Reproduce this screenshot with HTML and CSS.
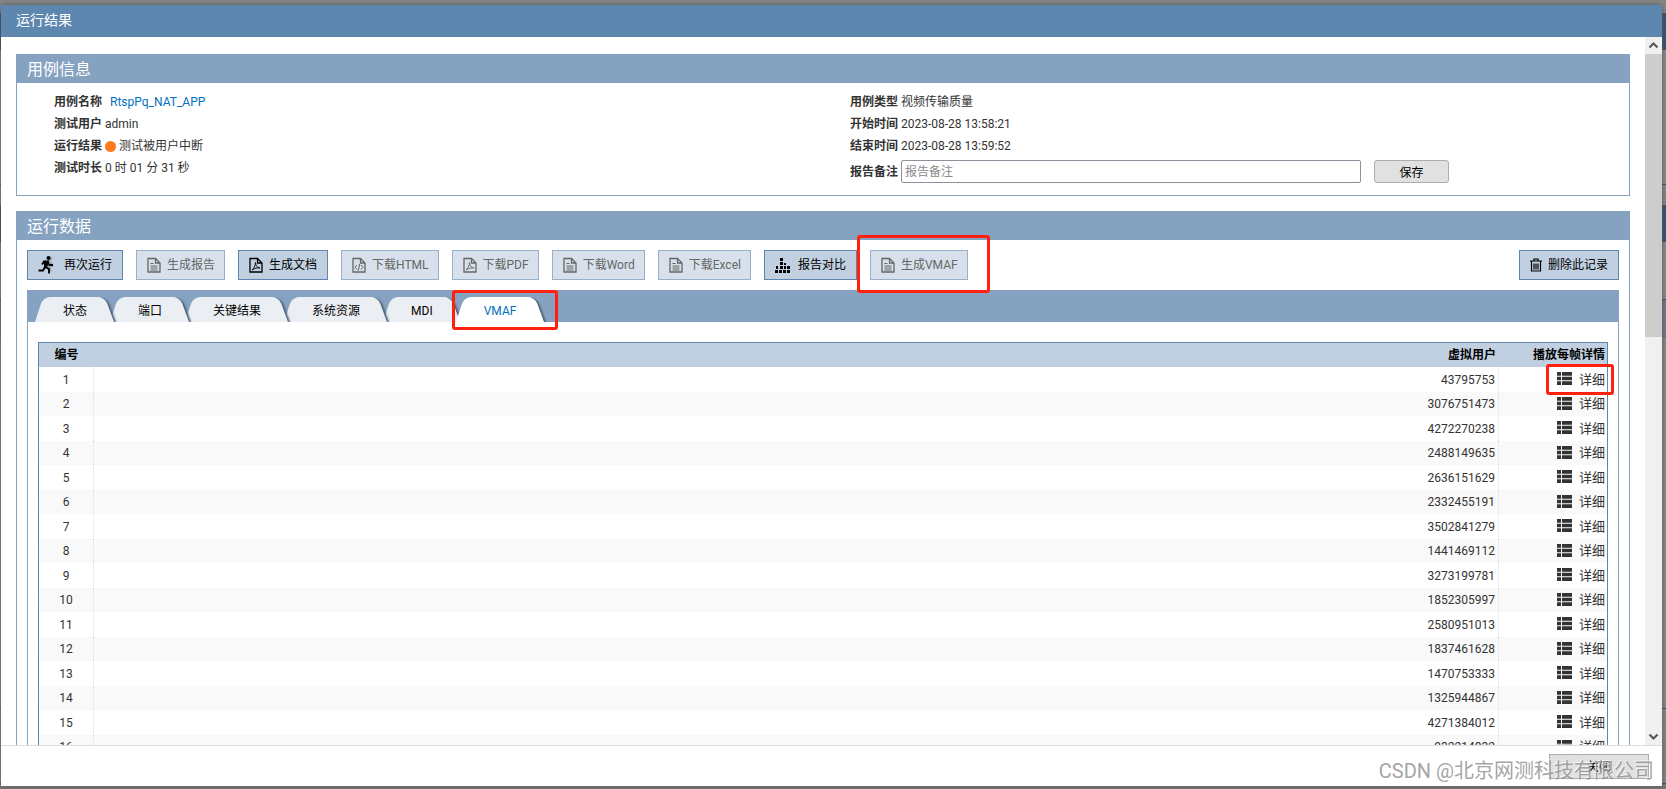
FILE: index.html
```html
<!DOCTYPE html>
<html lang="zh-CN">
<head>
<meta charset="utf-8">
<title>运行结果</title>
<link rel="stylesheet" href="styles.css">
</head>
<body>
<svg class="defs" aria-hidden="true">
  <symbol id="doc" viewBox="0 0 14 16"><path d="M1 1.5h7.5L13 6v9H1zM8.500 1.500V6H13" fill="none" stroke="currentColor" stroke-width="1.300"/><path d="M3.500 6.500h3M3.500 9h7M3.500 11h7M3.500 13h7" fill="none" stroke="currentColor"/></symbol>
  <symbol id="pdf" viewBox="0 0 14 16"><path d="M1 1.500h7.500L13 6v9H1zM8.500 1.500V6H13" fill="none" stroke="currentColor" stroke-width="1.300"/><path d="M3 13c1.500-.8 3.500-4.500 3.500-7.500 0 3 2 5.500 4.500 5.500-2.500-.6-5 .2-8 2z" fill="none" stroke="currentColor" stroke-width=".9"/></symbol>
  <symbol id="html" viewBox="0 0 14 16"><path d="M1 1.500h7.500L13 6v9H1zM8.500 1.500V6H13" fill="none" stroke="currentColor" stroke-width="1.300"/><path d="M5 8l-2 2.200L5 12.500M9 8l2 2.200-2 2.300M7.700 7l-1.400 6.500" fill="none" stroke="currentColor"/></symbol>
  <symbol id="list" viewBox="0 0 15 13"><path d="M0 0h4v3.700H0zM5 0h10v3.700H5zM0 4.650h4v3.700H0zM5 4.650h10v3.700H5zM0 9.300h4V13H0zM5 9.300h10V13H5z" fill="#333"/></symbol>
</svg>

<main class="dialog">
  <header class="dialog-title">运行结果</header>

  <div class="dialog-body">
    <div class="content">
      <section class="panel">
        <h2 class="panel-title">用例信息</h2>
        <div class="info">
          <dl class="info-col">
            <div class="info-row"><dt>用例名称</dt><dd><a class="case-link" href="#">RtspPq_NAT_APP</a></dd></div>
            <div class="info-row"><dt>测试用户</dt><dd>admin</dd></div>
            <div class="info-row"><dt>运行结果</dt><dd class="result"><span class="dot"></span>测试被用户中断</dd></div>
            <div class="info-row"><dt>测试时长</dt><dd>0 时 01 分 31 秒</dd></div>
          </dl>
          <dl class="info-col">
            <div class="info-row"><dt>用例类型</dt><dd>视频传输质量</dd></div>
            <div class="info-row"><dt>开始时间</dt><dd>2023-08-28 13:58:21</dd></div>
            <div class="info-row"><dt>结束时间</dt><dd>2023-08-28 13:59:52</dd></div>
            <div class="info-row note-row"><dt><label for="note">报告备注</label></dt><dd class="note"><input id="note" class="note-input" type="text" placeholder="报告备注"><button class="plain-btn save-btn" type="button">保存</button></dd></div>
          </dl>
        </div>
      </section>

      <section class="panel panel-data">
        <h2 class="panel-title">运行数据</h2>
        <div class="toolbar">
          <button class="btn btn-run" type="button"><svg class="ic-run" viewBox="0 0 16 18"><g opacity=".18"><circle cx="12.500" cy="2.500" r="2"/><path d="M7 4l6 1 3 5-3 2 1 5-4-5z"/></g><circle cx="10.500" cy="2" r="2"/><path d="M4 8.500L6 5.500h4L7.500 11l3.500 2v4.500M7 11l-2 3.500H.5M9.500 6.500l2 2.500H15" fill="none" stroke="#000" stroke-width="1.900"/><path d="M6 5h5L9 11.500 6 11z"/></svg>再次运行</button>
          <button class="btn" type="button" disabled><svg class="ic"><use href="#doc"/></svg>生成报告</button>
          <button class="btn" type="button"><svg class="ic"><use href="#pdf"/></svg>生成文档</button>
          <button class="btn" type="button" disabled><svg class="ic"><use href="#html"/></svg>下载HTML</button>
          <button class="btn" type="button" disabled><svg class="ic"><use href="#pdf"/></svg>下载PDF</button>
          <button class="btn" type="button" disabled><svg class="ic"><use href="#doc"/></svg>下载Word</button>
          <button class="btn" type="button" disabled><svg class="ic"><use href="#doc"/></svg>下载Excel</button>
          <button class="btn" type="button"><svg class="ic-cmp" viewBox="0 0 15 15"><path d="M5 0h3v3H5zM5 4h3v3H5zM1 8h2v3H1zM5 8h3v3H5zM9 8h2v3H9zM9 5h2v2H9zM0 12h3v3H0zM4 12h3v3H4zM8 12h3v3H8zM12 12h3v3h-3zM12 8h3v3h-3z"/></svg>报告对比</button>
          <span class="marked"><button class="btn" type="button" disabled><svg class="ic"><use href="#doc"/></svg>生成VMAF</button><span class="mark mark-btn"></span></span>
          <button class="btn btn-del" type="button"><svg class="ic-del" viewBox="0 0 12 14"><path d="M0 3h12M4 3V1h4v2M1.500 3.500V13h9V3.500M4 5.500v6M6 5.500v6M8 5.500v6" fill="none" stroke="#000" stroke-width="1.200"/></svg>删除此记录</button>
        </div>

        <div class="tabs-box">
          <nav class="tabs">
            <button class="tab" type="button"><span class="tab-shape"></span><span class="tab-text">状态</span></button>
            <button class="tab" type="button"><span class="tab-shape"></span><span class="tab-text">端口</span></button>
            <button class="tab" type="button"><span class="tab-shape"></span><span class="tab-text">关键结果</span></button>
            <button class="tab" type="button"><span class="tab-shape"></span><span class="tab-text">系统资源</span></button>
            <button class="tab" type="button"><span class="tab-shape"></span><span class="tab-text">MDI</span></button>
            <button class="tab tab-active" type="button"><span class="tab-shape"></span><span class="tab-text">VMAF</span><span class="mark mark-tab"></span></button>
          </nav>
          <div class="tab-page">
            <table class="grid">
              <thead><tr><th class="c-no">编号</th><th>虚拟用户</th><th class="c-more">播放每帧详情</th></tr></thead>
              <tbody>
                <tr><td>1</td><td>43795753</td><td><a class="more" href="#"><svg class="ic-list"><use href="#list"/></svg>详细<span class="mark mark-more"></span></a></td></tr>
                <tr><td>2</td><td>3076751473</td><td><a class="more" href="#"><svg class="ic-list"><use href="#list"/></svg>详细</a></td></tr>
                <tr><td>3</td><td>4272270238</td><td><a class="more" href="#"><svg class="ic-list"><use href="#list"/></svg>详细</a></td></tr>
                <tr><td>4</td><td>2488149635</td><td><a class="more" href="#"><svg class="ic-list"><use href="#list"/></svg>详细</a></td></tr>
                <tr><td>5</td><td>2636151629</td><td><a class="more" href="#"><svg class="ic-list"><use href="#list"/></svg>详细</a></td></tr>
                <tr><td>6</td><td>2332455191</td><td><a class="more" href="#"><svg class="ic-list"><use href="#list"/></svg>详细</a></td></tr>
                <tr><td>7</td><td>3502841279</td><td><a class="more" href="#"><svg class="ic-list"><use href="#list"/></svg>详细</a></td></tr>
                <tr><td>8</td><td>1441469112</td><td><a class="more" href="#"><svg class="ic-list"><use href="#list"/></svg>详细</a></td></tr>
                <tr><td>9</td><td>3273199781</td><td><a class="more" href="#"><svg class="ic-list"><use href="#list"/></svg>详细</a></td></tr>
                <tr><td>10</td><td>1852305997</td><td><a class="more" href="#"><svg class="ic-list"><use href="#list"/></svg>详细</a></td></tr>
                <tr><td>11</td><td>2580951013</td><td><a class="more" href="#"><svg class="ic-list"><use href="#list"/></svg>详细</a></td></tr>
                <tr><td>12</td><td>1837461628</td><td><a class="more" href="#"><svg class="ic-list"><use href="#list"/></svg>详细</a></td></tr>
                <tr><td>13</td><td>1470753333</td><td><a class="more" href="#"><svg class="ic-list"><use href="#list"/></svg>详细</a></td></tr>
                <tr><td>14</td><td>1325944867</td><td><a class="more" href="#"><svg class="ic-list"><use href="#list"/></svg>详细</a></td></tr>
                <tr><td>15</td><td>4271384012</td><td><a class="more" href="#"><svg class="ic-list"><use href="#list"/></svg>详细</a></td></tr>
                <tr><td>16</td><td>932214832</td><td><a class="more" href="#"><svg class="ic-list"><use href="#list"/></svg>详细</a></td></tr>
              </tbody>
            </table>
          </div>
        </div>
      </section>
    </div>

    <div class="scrollbar" aria-hidden="true">
      <svg class="arrow" viewBox="0 0 17 17"><path d="M4.500 10.500l4-4 4 4" fill="none" stroke="#555" stroke-width="2"/></svg>
      <div class="track"><div class="thumb"></div></div>
      <svg class="arrow" viewBox="0 0 17 17"><path d="M4.500 6.500l4 4 4-4" fill="none" stroke="#555" stroke-width="2"/></svg>
    </div>
  </div>

  <footer class="dialog-foot"><button class="plain-btn close-btn" type="button">关闭</button></footer>
</main>
<div class="watermark">CSDN @北京网测科技有限公司</div>
</body>
</html>
```
FILE: styles.css
```css
* { box-sizing: border-box; }
html { height: 100%; }
body {
  margin: 0;
  height: 100%;
  padding: 5px 4px 3px 1px;
  overflow: hidden;
  display: flex;
  font-family: Roboto, "Noto Sans CJK SC", sans-serif;
  font-size: 12px;
  line-height: 22px;
  color: #333;
  background: linear-gradient(#888 13px, #34506e 13px 50px, #8e8e8e 50px 184px, #34506e 184px 185px, #888 185px 205px, #34506e 205px 242px, #8e8e8e 242px 299px, #34506e 299px 300px, #6c7b8a 300px 338px, #8a8a8a 338px 708px, #34506e 708px 709px, #888 709px 783px, #34506e 783px 784px, #777 784px);
}
button, input { font: inherit; color: inherit; margin: 0; }
.defs { position: absolute; width: 0; height: 0; }

.dialog {
  flex: 1;
  display: flex;
  flex-direction: column;
  min-width: 0;
  background: #fff;
  box-shadow: 0 0 6px #555;
}
.dialog-title {
  height: 32px;
  padding-left: 15px;
  background: #5d87af;
  color: #fff;
  font-size: 14px;
  line-height: 31px;
}
.dialog-body { flex: 1; min-height: 0; display: flex; }
.content { flex: 1; min-width: 0; overflow: hidden; padding: 17px 15px 0; }

.panel { border: 1px solid #86a2c1; }
.panel-title {
  margin: 0;
  height: 28px;
  padding-left: 10px;
  background: #86a2c1;
  color: #fff;
  font-size: 16px;
  font-weight: 400;
  line-height: 29px;
}
.info { display: flex; gap: 17px; height: 112px; padding: 8px 0 0 37px; }
.info-col { flex: 1; margin: 0; }
.info-row { display: flex; gap: 3px; height: 22px; }
.info-row dt { font-weight: 700; }
.info-row dd { margin: 0; }
.case-link { margin-left: 5px; color: #0070c0; text-decoration: none; }
.result { display: flex; align-items: center; gap: 3px; }
.dot { width: 11px; height: 11px; border-radius: 50%; background: #ff7a1c; }
.note-row { padding-top: 3px; height: 27px; }
.note-row dt { line-height: 24px; }
.info-row .note { flex: 1; display: flex; gap: 13px; }
.note-input {
  width: 460px;
  height: 23px;
  padding: 0 3px;
  border: 1px solid #8f8f9d;
  border-radius: 2px;
  background: #fff;
}
.note-input::placeholder { color: #8a8a8a; }
.plain-btn {
  padding: 0;
  border: 1px solid #adadad;
  background: #e1e1e1;
  color: #000;
}
.save-btn { width: 75px; height: 23px; padding-top: 2px; border-radius: 3px; line-height: 20px; }

.panel-data { margin-top: 15px; }
.toolbar { display: flex; gap: 13px; padding: 10px 10px; }
.btn {
  display: flex;
  align-items: center;
  gap: 6px;
  height: 30px;
  padding: 0 10px;
  border: 1px solid #5d87af;
  background: #c1d0e1;
  color: #000;
  line-height: 26px;
  white-space: nowrap;
}
.btn:disabled { padding: 0 9px 0 10px; border-color: #97b1cd; background: #d8e1eb; color: #666; }
.btn-run { gap: 10px; }
.btn-del { margin-left: auto; }
.ic { width: 14px; height: 16px; }
.ic-run { width: 16px; height: 18px; }
.ic-cmp { width: 15px; height: 15px; margin-right: 2px; }
.ic-del { width: 12px; height: 14px; }

.marked { position: relative; }
.mark { position: absolute; border: 3px solid #ff2010; border-radius: 3px; pointer-events: none; }
.mark-btn { inset: -15px -22px -13px -13px; }
.mark-tab { inset: -7px -13px -8px -4px; }
.mark-more { inset: -4px -9px -3px -11px; }

.tabs-box { margin: 0 10px; border: 1px solid #86a2c1; border-top: 0; }
.tabs { display: flex; height: 32px; margin: 0 -1px; padding: 7px 0 0 8px; background: #86a2c1; }
.tab {
  position: relative;
  height: 25px;
  margin-right: -6px;
  padding: 2px 29px 0 28px;
  border: 0;
  background: none;
  color: #000;
}
.tab:nth-child(1) { z-index: 5; }
.tab:nth-child(2) { z-index: 4; }
.tab:nth-child(3) { z-index: 3; }
.tab:nth-child(4) { z-index: 2; }
.tab:nth-child(5) { z-index: 1; }
.tab-active { z-index: 6; color: #0070c0; }
.tab-text { position: relative; }
.tab-shape { position: absolute; inset: 0 -6px 0 0; overflow: hidden; }
.tab-shape::before, .tab-shape::after {
  content: "";
  position: absolute;
  top: 0;
  bottom: 0;
  background: #ebeff4;
  transform-origin: bottom;
}
.tab-shape::before { left: 0; right: 30px; border-radius: 7px 0 0 0; transform: skewX(-18deg); }
.tab-shape::after { left: 30px; right: 8px; border-radius: 0 7px 0 0; transform: skewX(20deg); box-shadow: 2px 1px 2px #4d6277; clip-path: inset(0 -6px 0 0); }
.tab-active .tab-shape::before, .tab-active .tab-shape::after { background: #fff; }
.tab-page { padding: 20px 10px 10px; }

.grid { width: 100%; border: 1px solid #5d87af; border-collapse: separate; border-spacing: 0; }
.grid th { height: 24px; padding: 0 3px; background: #c1d0e1; color: #000; font-weight: 700; text-align: right; }
.grid td { height: 24px; padding: 0 3px; text-align: right; border-right: 1px dotted #cfe2f3; line-height: 20px; }
.grid tr:nth-child(odd) td { height: 25px; }
.grid tr:nth-child(even) td { background: #f9f9f9; }
.grid .c-no { width: 55px; text-align: center; }
.grid .c-more { width: 108px; padding-right: 2px; }
.grid td:first-child { text-align: center; }
.grid td:last-child { padding-right: 2px; border-right: 0; }
.more {
  position: relative;
  display: inline-flex;
  align-items: center;
  gap: 7px;
  height: 24px;
  vertical-align: middle;
  color: #333;
  font-size: 13px;
  text-decoration: none;
}
.ic-list { width: 15px; height: 13px; margin-bottom: 2px; }

.scrollbar { width: 17px; display: flex; flex-direction: column; background: #f0f0f0; }
.arrow { width: 17px; height: 17px; }
.track { flex: 1; }
.thumb { height: 42%; background: #cdcdcd; }

.dialog-foot { height: 41px; padding: 8px 13px; border-top: 1px solid #ddd; text-align: right; }
.close-btn { width: 100px; height: 25px; line-height: 22px; }
.watermark {
  position: absolute;
  right: 12px;
  bottom: 3px;
  font-size: 20px;
  line-height: 30px;
  color: rgba(140, 140, 140, .8);
  text-shadow: -1px -1px 0 rgba(255, 255, 255, .7);
}
```
